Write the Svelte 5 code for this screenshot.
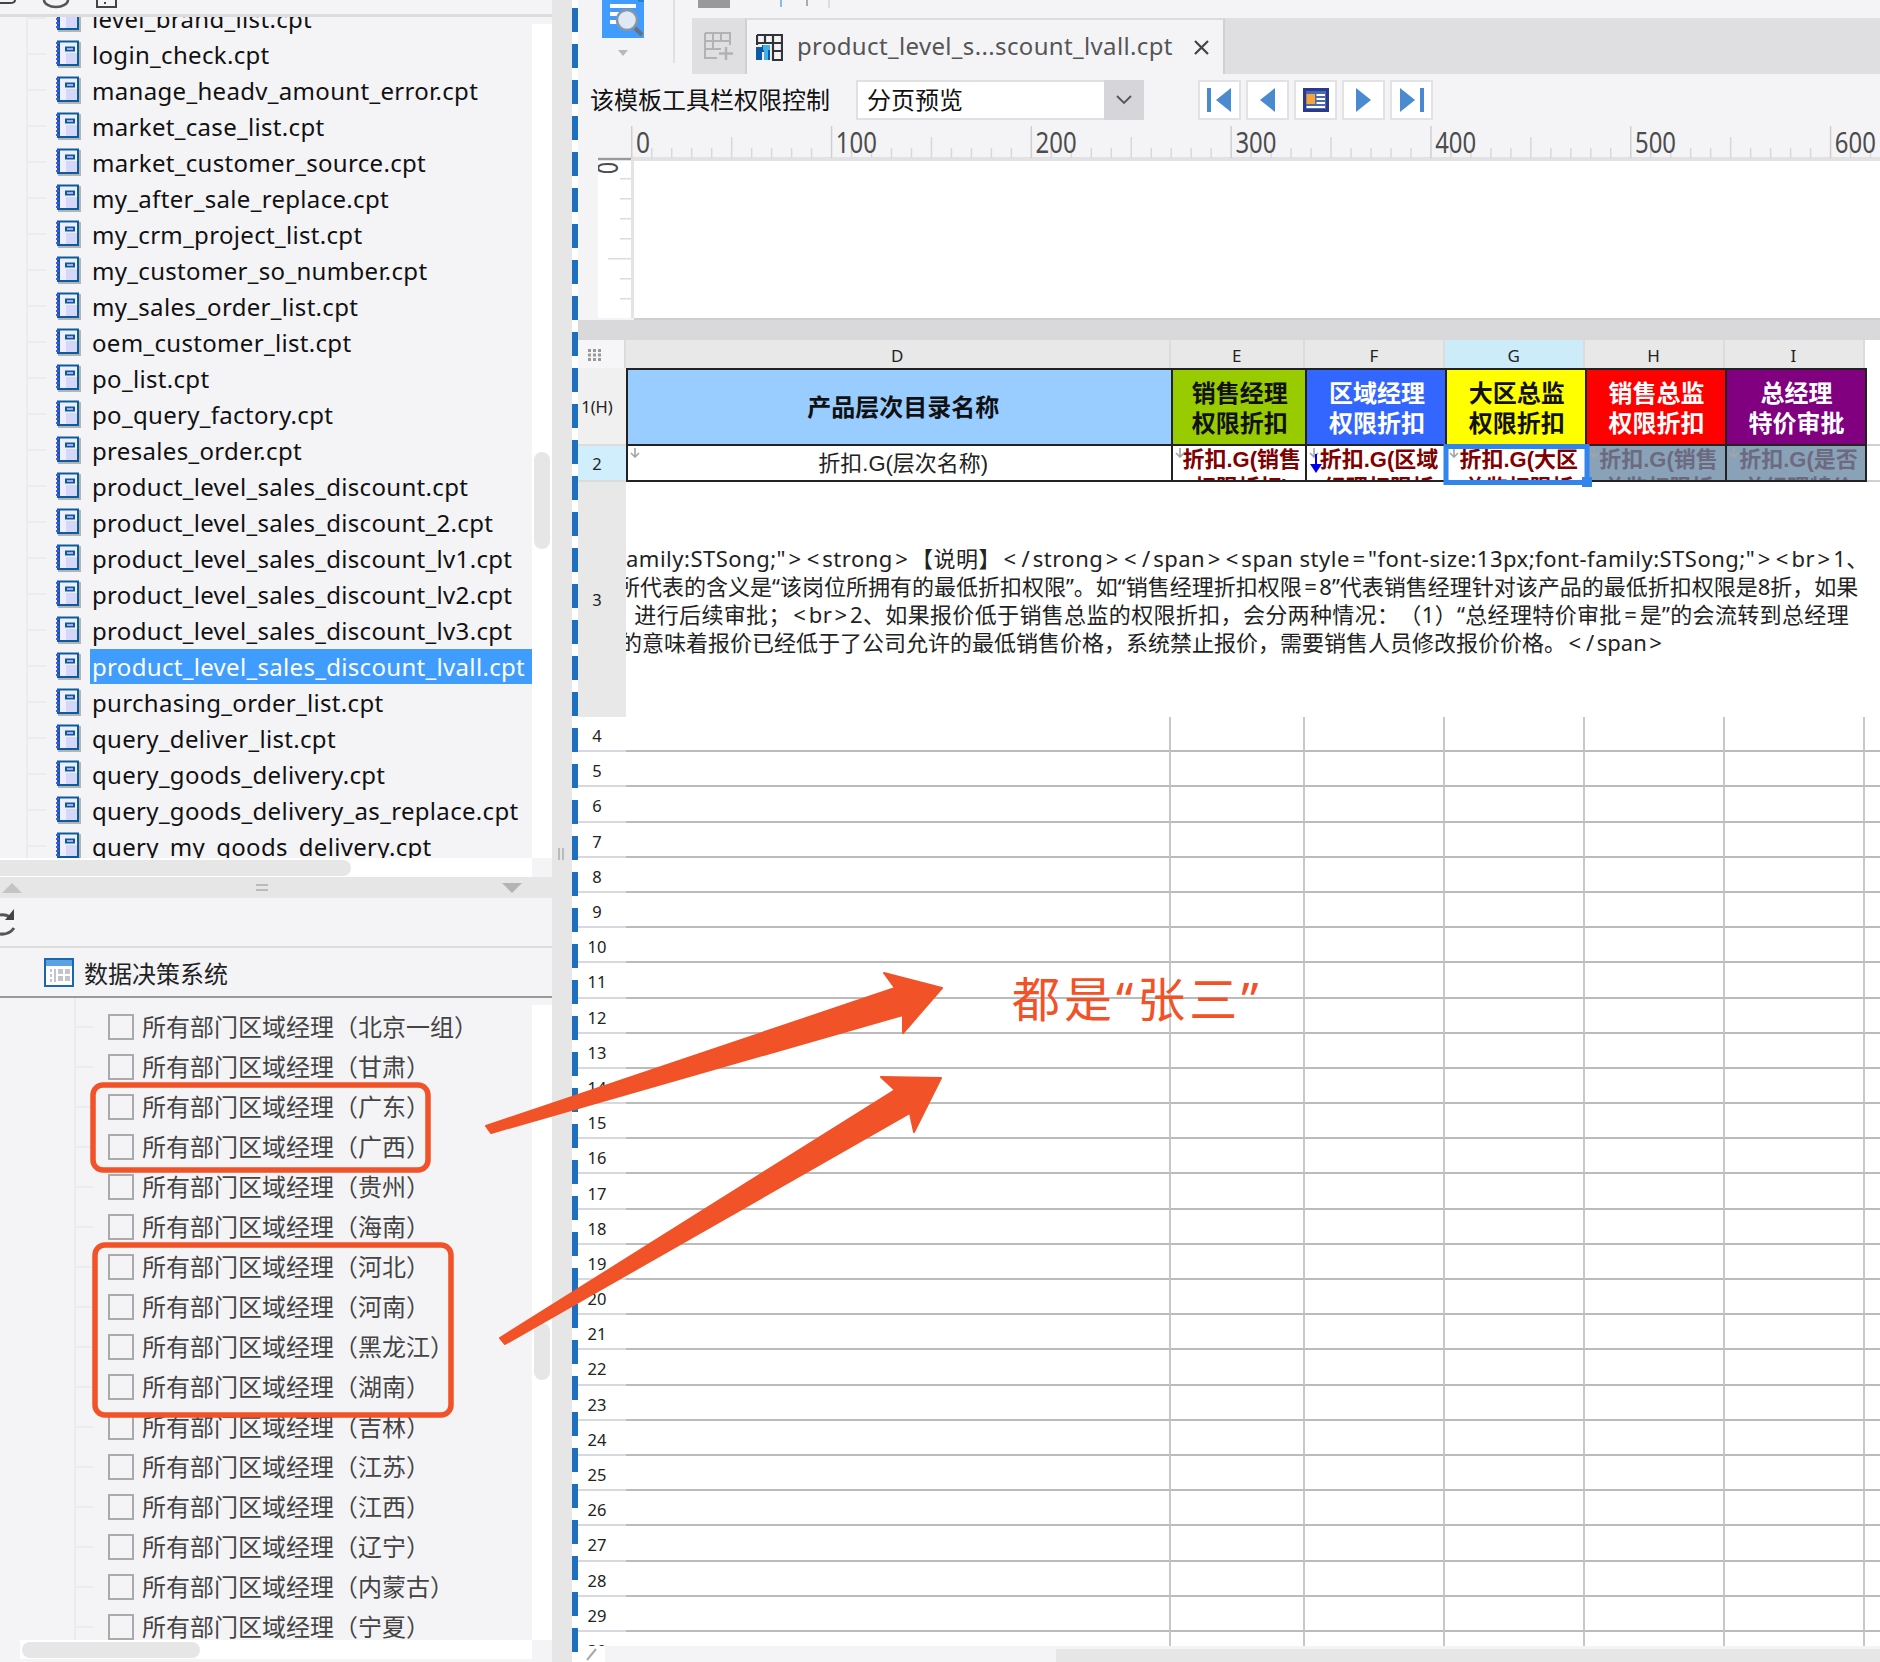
<script>
  const files = [
    "level_brand_list", "login_check", "manage_headv_amount_error", "market_case_list",
    "market_customer_source", "my_after_sale_replace", "my_crm_project_list", "my_customer_so_number",
    "my_sales_order_list", "oem_customer_list", "po_list", "po_query_factory", "presales_order",
    "product_level_sales_discount", "product_level_sales_discount_2", "product_level_sales_discount_lv1",
    "product_level_sales_discount_lv2", "product_level_sales_discount_lv3", "product_level_sales_discount_lvall",
    "purchasing_order_list", "query_deliver_list", "query_goods_delivery", "query_goods_delivery_as_replace",
    "query_my_goods_delivery"
  ]
  const selected = "product_level_sales_discount_lvall"

  const regions = ["北京一组", "甘肃", "广东", "广西", "贵州", "海南", "河北", "河南", "黑龙江", "湖南", "吉林", "江苏", "江西", "辽宁", "内蒙古", "宁夏"]

  const columns = ["D", "E", "F", "G", "H", "I"]
  const headers = [
    { cls: "h-e", lines: ["销售经理", "权限折扣"] },
    { cls: "h-f", lines: ["区域经理", "权限折扣"] },
    { cls: "h-g", lines: ["大区总监", "权限折扣"] },
    { cls: "h-h", lines: ["销售总监", "权限折扣"] },
    { cls: "h-i", lines: ["总经理", "特价审批"] }
  ]
  const formulas = [
    { cls: "", lines: ["折扣.G(销售", "权限折扣)"] },
    { cls: "has-flow", lines: ["折扣.G(区域", "经理权限折"] },
    { cls: "", lines: ["折扣.G(大区", "总监权限折"] },
    { cls: "muted", lines: ["折扣.G(销售", "总监权限折"] },
    { cls: "muted", lines: ["折扣.G(是否", "总经理特价"] }
  ]

  // the original font sets < > = / much wider than Noto Sans does
  const noteLines = [
    { cls: "l1", text: 'amily:STSong;"><strong>【说明】</strong></span><span style="font-size:13px;font-family:STSong;"><br>1、' },
    { cls: "l2", text: "所代表的含义是“该岗位所拥有的最低折扣权限”。如“销售经理折扣权限=8”代表销售经理针对该产品的最低折扣权限是8折，如果" },
    { cls: "l3", text: "）进行后续审批；<br>2、如果报价低于销售总监的权限折扣，会分两种情况：（1）“总经理特价审批=是”的会流转到总经理" },
    { cls: "l4", text: "的意味着报价已经低于了公司允许的最低销售价格，系统禁止报价，需要销售人员修改报价价格。</span>" }
  ]
  const wideChars = ["<", ">", "=", "/"]
  const tokens = (s) => s.split(/([<>=\/])/).filter(Boolean)

  const rows = Array.from({ length: 27 }, (_, i) => i + 4)

  const rulerMajors = [0, 1, 2, 3, 4, 5, 6]
  const rulerTicks = Array.from({ length: 64 }, (_, i) => i)
</script>

{#snippet fileIcon()}
  <svg class="file-icon" width="25" height="28" viewBox="0 0 25 28">
    <rect x="2" y="2" width="23" height="26" fill="#b4b4b4" />
    <rect x="1" y="0.5" width="22" height="25.5" fill="#0a5d9c" />
    <rect x="4" y="2.5" width="17" height="21.5" fill="#eeeefe" />
    <rect x="10" y="13" width="11" height="11" fill="#d6d6fa" />
    <rect x="0" y="2" width="3" height="2" fill="#5050f0" />
    <rect x="0" y="6" width="3" height="2" fill="#5050f0" />
    <rect x="0" y="10" width="3" height="2" fill="#5050f0" />
    <rect x="0" y="14" width="3" height="2" fill="#5050f0" />
    <rect x="0" y="18" width="3" height="2" fill="#5050f0" />
    <rect x="0" y="22" width="3" height="2" fill="#5050f0" />
    <rect x="9" y="6.5" width="10" height="5" fill="#0a5d9c" />
    <rect x="11" y="8" width="6" height="2" fill="#a8a8ee" />
  </svg>
{/snippet}

{#snippet downMark()}
  <svg class="down" width="10" height="10" viewBox="0 0 10 10">
    <path d="M5 0v9M1 5l4 4 4-4" fill="none" stroke="#a4a4a4" stroke-width="1.600" />
  </svg>
{/snippet}

<div class="app">
  <div class="left">
    <div class="tools">
      <svg width="552" height="14" viewBox="0 0 552 14">
        <path d="M0 3h10q5 0 5-3" fill="none" stroke="#444" stroke-width="2" />
        <path d="M44 0a12 7 0 0 0 24 0" fill="none" stroke="#555" stroke-width="2.5" />
        <path d="M97 0v7h19v-7" fill="none" stroke="#444" stroke-width="2" />
        <rect x="104" y="2" width="2" height="2" fill="#444" />
      </svg>
    </div>

    <div class="tree-panel">
      <div class="tree">
        <div class="tree-inner">
          {#each files as f}
            <div class="file">
              {@render fileIcon()}
              <span class="name {f === selected ? 'name-active' : ''}">{f}.cpt</span>
            </div>
          {/each}
        </div>
      </div>
      <div class="track"><div class="thumb thumb-a"></div></div>
      <div class="hbar"><div class="hthumb hthumb-a"></div></div>
      <div class="corner"></div>
    </div>

    <div class="splitter">
      <span class="tri-up"></span>
      <span class="grip"></span>
      <span class="tri-down"></span>
    </div>

    <div class="refresh-bar">
      <svg width="18" height="30" viewBox="0 0 18 30">
        <path d="M0 8q5-1 10 2" fill="none" stroke="#555" stroke-width="3" />
        <path d="M14 2v11h-9z" fill="#444" />
        <path d="M0 27q9 1 14-6" fill="none" stroke="#555" stroke-width="3" />
      </svg>
    </div>

    <div class="db-header">
      <svg width="30" height="29" viewBox="0 0 30 29">
        <rect x="1" y="1" width="28" height="27" fill="#fff" stroke="#1a66b0" stroke-width="2" />
        <rect x="2" y="2" width="26" height="6" fill="#5ba3e0" />
        <rect x="6" y="11" width="2" height="3" fill="#c0c6cc" />
        <rect x="6" y="16" width="2" height="3" fill="#c0c6cc" />
        <rect x="6" y="21" width="2" height="3" fill="#c0c6cc" />
        <rect x="10" y="11" width="2" height="13" fill="#c0c6cc" />
        <rect x="14" y="11" width="5" height="5" fill="#c0c6cc" />
        <rect x="21" y="11" width="5" height="5" fill="#c0c6cc" />
        <rect x="14" y="18" width="5" height="5" fill="#c0c6cc" />
        <rect x="21" y="18" width="5" height="5" fill="#c0c6cc" />
      </svg>
      <span>数据决策系统</span>
    </div>

    <div class="list-panel">
      <div class="list">
        {#each regions as r}
          <div class="region">
            <span class="check"></span>
            <span class="region-name">所有部门区域经理（{r}）</span>
          </div>
        {/each}
      </div>
      <div class="track track-b"><div class="thumb thumb-b"></div></div>
      <div class="hbar hbar-b"><div class="hthumb hthumb-b"></div></div>
      <div class="corner"></div>
    </div>
  </div>

  <div class="sash"><span class="sash-grip"></span></div>
  <div class="stripe"></div>

  <div class="right">
    <div class="head">
      <div class="head-tool">
        <svg width="42" height="38" viewBox="0 0 42 38">
          <rect width="42" height="38" fill="#409dfd" />
          <rect x="36" y="0" width="6" height="2" fill="#2a7fd0" />
          <rect x="8" y="4" width="26" height="4" fill="#fff" />
          <rect x="8" y="12" width="9" height="4" fill="#fff" />
          <rect x="8" y="20" width="9" height="4" fill="#fff" />
          <circle cx="25" cy="20" r="10" fill="#dfe9f5" stroke="#8496a8" stroke-width="2.5" />
          <path d="M33 28l7 7" stroke="#66727e" stroke-width="4" />
        </svg>
        <span class="tool-arrow"></span>
      </div>
      <div class="head-main">
        <div class="mini">
          <span class="mini-a"></span>
          <svg width="40" height="8" viewBox="0 0 40 8">
            <path d="M1 0v7" stroke="#8cb8e4" stroke-width="2" />
            <path d="M27 0v6" stroke="#aaa" stroke-width="2" />
          </svg>
          <span class="mini-sep"></span>
        </div>
        <div class="tabs">
          <div class="tab-add">
            <svg width="30" height="28" viewBox="0 0 30 28">
              <path d="M1 1h25v12M1 1v25h12M1 9h25M1 17h16M9 1v16M17 1v8" fill="none" stroke="#b2b2b2" stroke-width="2" />
              <path d="M22 15v13M15 21.500h14" stroke="#b2b2b2" stroke-width="2.5" />
            </svg>
          </div>
          <div class="tab">
            <svg width="27" height="27" viewBox="0 0 27 27">
              <path d="M1 1h25v25h-10M1 1v10M1 9h25M1 1M9 1v8M17 1v25M17 17h9" fill="none" stroke="#303438" stroke-width="2.200" />
              <path d="M0 13h6v-2h8v15h-5v-8h-3v8h-6z" fill="#0a5aa8" />
              <path d="M7 11h7v5h-2v10h-4v-10h-1z" fill="#45b0e6" />
            </svg>
            <span class="tab-name">product_level_s...scount_lvall.cpt</span>
            <svg class="tab-close" width="17" height="17" viewBox="0 0 17 17">
              <path d="M2 2l13 13M15 2l-13 13" stroke="#444" stroke-width="2.200" />
            </svg>
          </div>
        </div>
      </div>
    </div>

    <div class="form-row">
      <span class="form-label">该模板工具栏权限控制</span>
      <div class="select">
        <span class="select-value">分页预览</span>
        <span class="select-btn">
          <svg width="16" height="10" viewBox="0 0 16 10">
            <path d="M1 1l7 7 7-7" fill="none" stroke="#555" stroke-width="1.800" />
          </svg>
        </span>
      </div>
      <div class="nav">
        <button class="nav-btn" aria-label="first">
          <svg width="26" height="24" viewBox="0 0 26 24"><rect x="0" width="4" height="24" fill="#4a8ad0" /><path d="M9 12l15-12v24z" fill="#4a8ad0" /></svg>
        </button>
        <button class="nav-btn" aria-label="previous">
          <svg width="15" height="24" viewBox="0 0 15 24"><path d="M0 12l15-12v24z" fill="#4a8ad0" /></svg>
        </button>
        <button class="nav-btn" aria-label="preview">
          <svg width="26" height="24" viewBox="0 0 26 24">
            <rect width="26" height="24" fill="#2b3a8f" />
            <rect x="3" y="3" width="20" height="18" fill="#4a6bb0" />
            <rect x="3.500" y="6" width="8.500" height="10" fill="#f5a53a" />
            <rect x="13.500" y="6" width="8.500" height="2" fill="#fff" />
            <rect x="13.500" y="10" width="8.500" height="2" fill="#fff" />
            <rect x="13.500" y="14" width="8.500" height="2" fill="#fff" />
            <rect x="3.500" y="18" width="18.500" height="2" fill="#fff" />
          </svg>
        </button>
        <button class="nav-btn" aria-label="next">
          <svg width="15" height="24" viewBox="0 0 15 24"><path d="M15 12l-15-12v24z" fill="#4a8ad0" /></svg>
        </button>
        <button class="nav-btn" aria-label="last">
          <svg width="26" height="24" viewBox="0 0 26 24"><rect x="21" width="4" height="24" fill="#4a8ad0" /><path d="M16 12l-15-12v24z" fill="#4a8ad0" /></svg>
        </button>
      </div>
    </div>

    <div class="ruler-row">
      <svg width="1282" height="35" viewBox="598 126 1282 35">
        <rect x="598" y="157" width="1282" height="4" fill="#e2e2e4" />
        <rect x="598" y="158" width="33" height="2" fill="#999" />
        {#each rulerTicks as t}
          {#if t % 10 !== 0}
            <rect x={631 + t * 19.98} y={t % 5 === 0 ? 137 : 148} width="1.500" height={t % 5 === 0 ? 21 : 10} fill="#d8d8da" />
          {/if}
        {/each}
        {#each rulerMajors as m}
          <rect x={631 + m * 199.8} y="126" width="1.500" height="32" fill="#cfcfd2" />
          <text class="ruler-num" x={636 + m * 199.8} y="153" textLength={m === 0 ? 14 : 41} lengthAdjust="spacingAndGlyphs">{m * 100}</text>
        {/each}
      </svg>
    </div>

    <div class="canvas-row">
      <svg class="v-ruler" width="36" height="157" viewBox="598 161 36 157">
        <rect x="598" y="161" width="36" height="157" fill="#fff" />
        <rect x="631" y="161" width="3" height="157" fill="#e4e4e6" />
        <text class="ruler-num" x="0" y="0" transform="translate(618 174) rotate(-90)" textLength="12" lengthAdjust="spacingAndGlyphs">0</text>
        <rect x="620" y="178" width="11" height="1.500" fill="#dcdcdc" />
        <rect x="620" y="198" width="11" height="1.500" fill="#dcdcdc" />
        <rect x="620" y="218" width="11" height="1.500" fill="#dcdcdc" />
        <rect x="620" y="238" width="11" height="1.500" fill="#dcdcdc" />
        <rect x="608" y="258" width="23" height="1.500" fill="#dcdcdc" />
        <rect x="620" y="278" width="11" height="1.500" fill="#dcdcdc" />
        <rect x="620" y="298" width="11" height="1.500" fill="#dcdcdc" />
      </svg>
      <div class="canvas"></div>
    </div>

    <div class="band"></div>

    <div class="sheet">
      <div class="col-head corner-head">
        <svg width="14" height="12" viewBox="0 0 14 12">
          <path d="M0 0h3v3h-3zM5 0h3v3h-3zM10 0h3v3h-3zM0 4.500h3v3h-3zM5 4.500h3v3h-3zM10 4.500h3v3h-3zM0 9h3v3h-3zM5 9h3v3h-3zM10 9h3v3h-3z" fill="#999" />
        </svg>
      </div>
      {#each columns as c}
        <div class="col-head {c === 'G' ? 'col-active' : ''}">{c}</div>
      {/each}
      <div class="tail"></div>

      <div class="row-head rh-1">1(H)</div>
      <div class="head-cell h-d">产品层次目录名称</div>
      {#each headers as h}
        <div class="head-cell {h.cls}">{h.lines[0]}<br />{h.lines[1]}</div>
      {/each}
      <div class="tail tail-line"></div>

      <div class="row-head rh-2">2</div>
      <div class="val-cell val-d">
        {@render downMark()}
        折扣.G(层次名称)
      </div>
      {#each formulas as f}
        <div class="val-cell val-f {f.cls}">
          {@render downMark()}
          {#if f.cls === 'has-flow'}
            <svg class="flow" width="12" height="20" viewBox="0 0 12 20"><path d="M6 0v12" stroke="#0000ee" stroke-width="2" /><path d="M0 10h12l-6 9z" fill="#0000ee" /></svg>
          {/if}
          {f.lines[0]}<br />{f.lines[1]}
        </div>
      {/each}
      <div class="tail tail-line"></div>

      <div class="row-head rh-3">3</div>
      <div class="note">
        {#each noteLines as line}
          <div class={line.cls}>{#each tokens(line.text) as t}{#if wideChars.includes(t)}<span class="wide">{t}</span>{:else}{t}{/if}{/each}</div>
        {/each}
      </div>

      {#each rows as n}
        <div class="row-head rh-n">{n}</div>
        {#each columns as c}
          <div class="blank" data-col={c}></div>
        {/each}
        <div class="blank blank-tail"></div>
      {/each}
    </div>

    <div class="bottom-bar">
      <div class="pencil">
        <svg width="14" height="14" viewBox="0 0 14 14"><path d="M2 13l9-11" stroke="#aaa" stroke-width="2" /></svg>
      </div>
      <div class="bottom-thumb"></div>
    </div>
  </div>

  <svg class="marks" width="1880" height="1662" viewBox="0 0 1880 1662">
    <rect x="1446" y="446.500" width="141" height="36" fill="none" stroke="#3385ee" stroke-width="5" />
    <rect x="1582" y="477" width="10" height="10" fill="#3385ee" />
    <rect x="93" y="1085" width="335" height="85" rx="10" fill="none" stroke="#f15227" stroke-width="5.500" />
    <rect x="95" y="1245" width="356" height="170" rx="10" fill="none" stroke="#f15227" stroke-width="5.500" />
    <polygon points="486,1126 895,988 884,973 942,988 903,1033 903,1015 491,1133" fill="#f15227" stroke="#f15227" stroke-width="2" stroke-linejoin="round" />
    <polygon points="500,1338 895,1090 881,1077 941,1078 914,1132 910,1113 505,1344" fill="#f15227" stroke="#f15227" stroke-width="2" stroke-linejoin="round" />
  </svg>
  <div class="callout">都是“张三”</div>
</div>

<style>
  :global(body) {
    margin: 0;
    background: #f4f4f7;
  }

  .app {
    position: relative;
    display: flex;
    width: 1880px;
    height: 1662px;
    overflow: hidden;
    background: #f4f4f7;
    color: #111;
    font-family: "Noto Sans", "Noto Sans CJK SC", sans-serif;
    font-size: 24px;
    text-spacing-trim: space-all;
  }

  .left {
    width: 552px;
    display: flex;
    flex-direction: column;
    flex-shrink: 0;
  }

  .tools {
    height: 14px;
    overflow: hidden;
  }

  .tools svg {
    display: block;
  }

  .tree-panel {
    height: 863px;
    border-top: 3px solid #dcdcdc;
    box-sizing: border-box;
    display: grid;
    grid-template-columns: 532px 20px;
    grid-template-rows: 841px 19px;
  }

  .tree {
    overflow: hidden;
  }

  .tree-inner {
    margin-top: -17px;
    background: linear-gradient(#ececef, #ececef) 26px 0 / 2px 100% no-repeat;
  }

  .file {
    height: 36px;
    display: flex;
    align-items: center;
    padding-left: 56px;
    background: linear-gradient(#ececef, #ececef) 28px 50% / 18px 2px no-repeat;
  }

  .file-icon {
    flex-shrink: 0;
    margin-right: 9px;
  }

  .name {
    flex: 1;
    height: 35px;
    line-height: 35px;
    padding-left: 2px;
    white-space: nowrap;
    color: #111;
    letter-spacing: 0.32px;
  }

  .name-active {
    background: #409dfd;
    color: #fff;
  }

  .track {
    background: linear-gradient(#f4f4f7, #f4f4f7) 0 0 / 100% 7px no-repeat, #fff;
    padding-top: 435px;
    box-sizing: border-box;
  }

  .track-b {
    background: linear-gradient(#f4f4f7, #f4f4f7) 0 0 / 100% 7px no-repeat, #fff;
    padding-top: 325px;
  }

  .thumb {
    width: 16px;
    margin-left: 2px;
    border-radius: 8px;
    background: #e6e6e6;
  }

  .thumb-a {
    height: 97px;
  }

  .thumb-b {
    height: 57px;
  }

  .hbar {
    background: #fff;
    padding-top: 2px;
    box-sizing: border-box;
  }

  .hbar-b {
    margin-left: 20px;
  }

  .hthumb {
    height: 16px;
    border-radius: 8px;
    background: #e6e6e6;
  }

  .hthumb-a {
    width: 351px;
    border-radius: 0 8px 8px 0;
  }

  .hthumb-b {
    width: 178px;
    margin-left: 2px;
  }

  .corner {
    background: #f4f4f7;
  }

  .splitter {
    height: 21px;
    background: #e6e6e6;
    display: flex;
    align-items: center;
    justify-content: space-between;
    padding: 0 30px 0 2px;
  }

  .tri-up,
  .tri-down {
    width: 0;
    height: 0;
    border-left: 10px solid transparent;
    border-right: 10px solid transparent;
  }

  .tri-up {
    border-bottom: 10px solid #c4c4c4;
  }

  .tri-down {
    border-top: 10px solid #b4b4b4;
  }

  .grip {
    width: 12px;
    height: 7px;
    border-top: 2px solid #bbb;
    border-bottom: 2px solid #bbb;
    box-sizing: border-box;
  }

  .refresh-bar {
    height: 48px;
    display: flex;
    align-items: center;
  }

  .db-header {
    height: 48px;
    box-sizing: content-box;
    border-top: 2px solid #dcdcdc;
    border-bottom: 2px solid #999;
    display: flex;
    align-items: center;
    gap: 10px;
    padding-left: 44px;
    color: #222;
  }

  .list-panel {
    flex: 1;
    display: grid;
    grid-template-columns: 532px 20px;
    grid-template-rows: 642px 19px;
  }

  .list {
    overflow: hidden;
    padding-top: 9px;
    box-sizing: border-box;
    background: linear-gradient(#ececef, #ececef) 74px 0 / 2px 100% no-repeat;
  }

  .region {
    height: 40px;
    display: flex;
    align-items: center;
    padding-left: 108px;
    color: #444;
    white-space: nowrap;
    background: linear-gradient(#ececef, #ececef) 76px 50% / 18px 2px no-repeat;
  }

  .region-name {
    padding-bottom: 3px;
  }

  .check {
    width: 26px;
    height: 26px;
    box-sizing: border-box;
    border: 2.500px solid #aaa;
    margin-right: 8px;
    flex-shrink: 0;
  }

  .sash {
    width: 20px;
    flex-shrink: 0;
    background: #e6e6e6;
    padding-top: 848px;
    box-sizing: border-box;
  }

  .sash-grip {
    display: block;
    width: 6px;
    height: 12px;
    margin-left: 6px;
    border-left: 2px solid #bbb;
    border-right: 2px solid #bbb;
    box-sizing: border-box;
  }

  .stripe {
    width: 6px;
    flex-shrink: 0;
    background: linear-gradient(#fff 8px, #1f6fbf 8px, #1f6fbf 32px, #fff 32px) 0 0 / 6px 36px repeat-y;
  }

  .right {
    width: 1302px;
    display: flex;
    flex-direction: column;
    flex-shrink: 0;
  }

  .head {
    height: 74px;
    display: flex;
  }

  .head-tool {
    width: 114px;
    height: 63px;
    box-sizing: border-box;
    padding-left: 24px;
    position: relative;
  }

  .head-tool svg {
    display: block;
  }

  .head-tool::after {
    content: "";
    position: absolute;
    right: 17px;
    top: 0;
    width: 2px;
    height: 63px;
    background: #e0e0e2;
  }

  .tool-arrow {
    display: block;
    width: 0;
    height: 0;
    margin: 12px 0 0 16px;
    border-left: 5px solid transparent;
    border-right: 5px solid transparent;
    border-top: 6px solid #b8b8b8;
  }

  .head-main {
    flex: 1;
    display: flex;
    flex-direction: column;
  }

  .mini {
    height: 18px;
    display: flex;
    align-items: flex-start;
    padding-left: 6px;
  }

  .mini svg {
    margin-left: 50px;
  }

  .mini-a {
    width: 32px;
    height: 8px;
    background: #999;
  }

  .mini-sep {
    width: 2px;
    height: 8px;
    margin-left: 8px;
    background: #ddd;
  }

  .tabs {
    height: 56px;
    display: flex;
    background: #dfdfe1;
  }

  .tab-add {
    width: 53px;
    display: flex;
    align-items: center;
    justify-content: center;
  }

  .tab {
    width: 480px;
    box-sizing: border-box;
    background: #f4f4f7;
    border-top: 2px solid #dcdcdc;
    border-left: 2px solid #d0d0d2;
    border-right: 2px solid #d0d0d2;
    display: flex;
    align-items: center;
    padding-left: 9px;
  }

  .tab-name {
    margin-left: 14px;
    padding-bottom: 4px;
    color: #555;
    white-space: nowrap;
    letter-spacing: 0.35px;
  }

  .tab-close {
    margin-left: 20px;
  }

  .form-row {
    height: 52px;
    display: flex;
    align-items: center;
    padding-left: 12px;
    box-sizing: border-box;
  }

  .form-label {
    width: 266px;
    padding-bottom: 3px;
  }

  .select {
    width: 288px;
    height: 40px;
    display: flex;
    box-sizing: border-box;
    background: #fff;
    border: 2px solid #e0e0e2;
    border-right: 0;
  }

  .select-value {
    flex: 1;
    padding-left: 9px;
    line-height: 36px;
  }

  .select-btn {
    width: 40px;
    margin: -2px 0;
    background: #d6d6da;
    display: flex;
    align-items: center;
    justify-content: center;
  }

  .nav {
    display: flex;
    gap: 5px;
    margin-left: 54px;
  }

  .nav-btn {
    width: 43px;
    height: 40px;
    padding: 0;
    box-sizing: border-box;
    background: #fff;
    border: 2px solid #e2e2e4;
    display: flex;
    align-items: center;
    justify-content: center;
  }

  .ruler-row {
    height: 35px;
    padding-left: 20px;
  }

  .ruler-row svg,
  .v-ruler {
    display: block;
  }

  .ruler-num {
    font-family: "Noto Sans", sans-serif;
    font-size: 29px;
    fill: #4c4c4c;
  }

  .canvas-row {
    height: 159px;
    display: flex;
    padding-left: 20px;
  }

  .canvas {
    flex: 1;
    height: 157px;
    background: #fff;
    border-bottom: 2px solid #cfcfd2;
  }

  .band {
    height: 20px;
    background: #d9d9dc;
  }

  .sheet {
    height: 1306px;
    overflow: hidden;
    background: #fff;
    display: grid;
    grid-template-columns: 48px 544.5px 134.5px 140px 139.5px 140px 140px 15.5px;
    grid-template-rows: 28px 78px 36px 235px;
    grid-auto-rows: 35.2px;
  }

  .col-head {
    background: #e8e8e8;
    border-right: 2px solid #dcdcdc;
    box-sizing: border-box;
    display: flex;
    align-items: center;
    justify-content: center;
    padding-top: 2px;
    font-size: 17px;
    color: #222;
  }

  .corner-head {
    background: #f6f6f8;
    justify-content: flex-start;
    padding-left: 10px;
  }

  .col-active {
    background: #ccecfa;
  }

  .tail {
    background: #fff;
  }

  .tail-line {
    border-bottom: 2px solid #d0d0d2;
    box-sizing: border-box;
  }

  .row-head {
    display: flex;
    align-items: center;
    justify-content: center;
    padding-right: 10px;
    box-sizing: border-box;
    font-size: 16.5px;
    color: #222;
    background: #fff;
  }

  .rh-1 {
    background: #f0f0f0;
    border-bottom: 2px solid #dcdcdc;
  }

  .rh-2 {
    background: #d0eefb;
    border-bottom: 2px solid #dcdcdc;
  }

  .rh-3 {
    background: #e8e8e8;
  }

  .rh-n {
    padding-top: 4px;
    border-bottom: 2px solid #d8d8e0;
  }

  .head-cell {
    position: relative;
    left: 2px;
    box-sizing: border-box;
    border-top: 2px solid #222;
    border-right: 2px solid #222;
    border-bottom: 2px solid #222;
    display: flex;
    align-items: center;
    justify-content: center;
    text-align: center;
    font-weight: 700;
    line-height: 30px;
    padding-left: 2px;
    font-family: "Noto Sans CJK SC", sans-serif;
  }

  .h-d {
    left: 0;
    margin-right: -2px;
    background: #99ccff;
    border-left: 2px solid #222;
    padding-left: 8px;
    padding-bottom: 2px;
  }

  .h-e {
    background: #99cc00;
  }

  .h-f {
    background: #3366ff;
    color: #fff;
  }

  .h-g {
    background: #ffff00;
  }

  .h-h {
    background: #ff0000;
    color: #fff;
  }

  .h-i {
    background: #800080;
    color: #fff;
  }

  .val-cell {
    position: relative;
    left: 2px;
    box-sizing: border-box;
    overflow: hidden;
    background: #fff;
    border-right: 2px solid #222;
    border-bottom: 2px solid #222;
    text-align: center;
    font-size: 22px;
    white-space: nowrap;
    font-family: "Liberation Sans", "Noto Sans CJK SC", sans-serif;
  }

  .val-d {
    left: 0;
    margin-right: -2px;
    border-left: 2px solid #222;
    line-height: 36px;
    padding-left: 8px;
    color: #222;
  }

  .val-f {
    font-weight: 700;
    line-height: 28px;
    padding-left: 6px;
    color: #800000;
  }

  .muted {
    background: #8aa2b8;
    color: #6d6a80;
  }

  .down {
    position: absolute;
    left: 2px;
    top: 2px;
  }

  .flow {
    position: absolute;
    left: 3px;
    top: 8px;
  }

  .note {
    grid-column: 2 / -1;
    overflow: hidden;
    background: #fff;
    box-sizing: border-box;
    padding-top: 62px;
    font-size: 22px;
    line-height: 28px;
    color: #222;
    white-space: nowrap;
  }

  .wide {
    padding: 0 2.500px;
  }

  .l1 {
    letter-spacing: 0.5px;
  }

  .l2 {
    margin-left: -8px;
  }

  .l3 {
    margin-left: -14px;
    letter-spacing: 0.35px;
  }

  .l4 {
    margin-left: -6px;
  }

  .blank {
    box-sizing: border-box;
    border-right: 2px solid #c8c8c8;
    border-bottom: 2px solid #bbb;
  }

  .blank-tail {
    border-right: 0;
  }

  .bottom-bar {
    flex: 1;
    display: flex;
    justify-content: space-between;
    align-items: flex-end;
  }

  .pencil {
    width: 27px;
    height: 16px;
    background: #fff;
    display: flex;
    align-items: center;
    justify-content: center;
  }

  .bottom-thumb {
    width: 824px;
    height: 13px;
    background: #e6e6e6;
  }

  .marks {
    position: absolute;
    left: 0;
    top: 0;
    pointer-events: none;
  }

  .callout {
    position: absolute;
    left: 1012px;
    top: 966px;
    font-size: 48px;
    line-height: 66px;
    letter-spacing: 4px;
    color: #f15227;
    white-space: nowrap;
    font-family: "Noto Sans", "Noto Sans CJK SC", sans-serif;
  }
</style>
